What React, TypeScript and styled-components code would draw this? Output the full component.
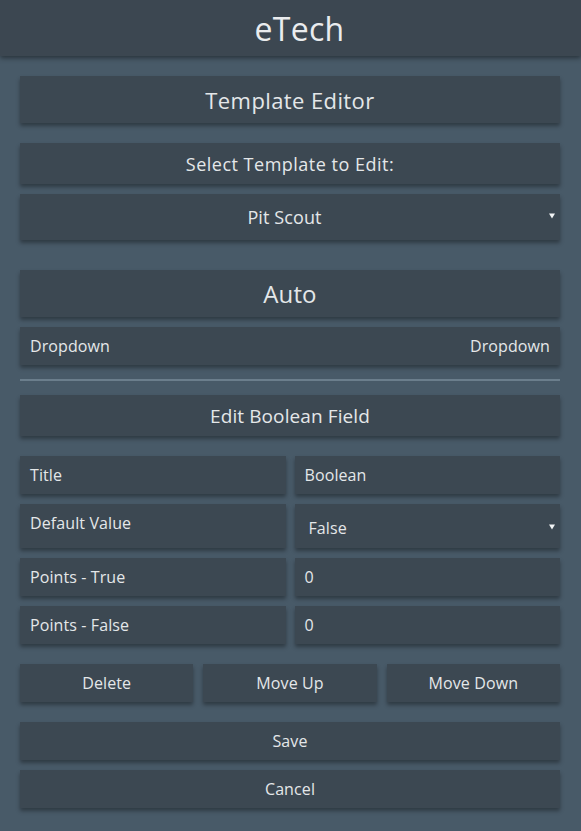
import React from "react";
import styled, { createGlobalStyle } from "styled-components";

const Global = createGlobalStyle`
  html, body {
    margin: 0;
    padding: 0;
    background: #485a68;
  }
  body {
    font-family: "Open Sans", "Noto Sans", sans-serif;
    font-weight: 400;
    color: #e4e7e9;
  }
  * { box-sizing: border-box; }
`;

const Page = styled.div`
  min-height: 831px;
  background: #485a68;
  display: flex;
  flex-direction: column;
`;

const Header = styled.header`
  height: 56px;
  background: #3c4751;
  box-shadow: 0 2px 5px rgba(0, 0, 0, 0.45);
  display: flex;
  align-items: center;
  justify-content: center;
  padding-left: 18px;
  font-size: 32px;
  letter-spacing: 0.3px;
  color: #eaecee;
  position: relative;
  z-index: 1;
`;

const Main = styled.main`
  padding: 20px 21px 23px 20px;
  display: flex;
  flex-direction: column;
`;

const Panel = styled.div<{ $mt?: number; $h: number; $fs: number; $ls?: number; $align?: "center" | "between" }>`
  margin-top: ${(p) => p.$mt ?? 0}px;
  height: ${(p) => p.$h}px;
  background: #3c4852;
  box-shadow: 0 3px 4px rgba(0, 0, 0, 0.35);
  display: flex;
  align-items: center;
  justify-content: ${(p) => (p.$align === "between" ? "space-between" : "center")};
  padding: 0 10px;
  font-size: ${(p) => p.$fs}px;
  letter-spacing: ${(p) => p.$ls ?? 0.1}px;
`;

const SelectBox = styled.div<{ $mt?: number; $h: number; $fs: number; $center?: boolean }>`
  margin-top: ${(p) => p.$mt ?? 0}px;
  height: ${(p) => p.$h}px;
  background: #3c4852;
  box-shadow: 0 3px 4px rgba(0, 0, 0, 0.35);
  display: grid;
  grid-template-columns: ${(p) => (p.$center ? "1fr auto 1fr" : "1fr auto")};
  align-items: center;
  padding: ${(p) => (p.$center ? "0 11px 0 0" : "3px 5px 0 14px")};
  font-size: ${(p) => p.$fs}px;
  letter-spacing: 0.1px;
`;

const SelectText = styled.span<{ $center?: boolean }>`
  grid-column: ${(p) => (p.$center ? 2 : 1)};
`;

const Arrow = styled.svg<{ $pull?: number }>`
  justify-self: end;
  width: 6px;
  height: 6px;
  margin-top: -2px;
  margin-right: ${(p) => -(p.$pull ?? 0)}px;
`;

const Divider = styled.hr`
  margin: 14px 0;
  border: none;
  height: 2px;
  background: #6b7e8c;
`;

const FieldGrid = styled.div`
  margin-top: 20px;
  display: grid;
  grid-template-columns: 1fr 1fr;
  column-gap: 9px;
  row-gap: 10px;
`;

const Cell = styled.div`
  min-height: 38px;
  background: #3c4852;
  box-shadow: 0 3px 4px rgba(0, 0, 0, 0.35);
  padding: 0 10px;
  line-height: 38px;
  font-size: 16px;
  letter-spacing: 0.1px;
`;

const ButtonRow = styled.div`
  margin-top: 20px;
  display: grid;
  grid-template-columns: 1fr 1fr 1fr;
  column-gap: 10px;
`;

const Button = styled.button<{ $mt?: number }>`
  margin-top: ${(p) => p.$mt ?? 0}px;
  height: 38px;
  border: none;
  background: #3c4852;
  box-shadow: 0 3px 4px rgba(0, 0, 0, 0.35);
  color: #e4e7e9;
  font-family: "Open Sans", "Noto Sans", sans-serif;
  font-weight: 400;
  font-size: 16px;
  letter-spacing: 0.1px;
  padding: 0;
  cursor: pointer;
`;

const DownArrow = ({ pull }: { pull?: number }) => (
  <Arrow viewBox="0 0 6 6" $pull={pull}>
    <polygon points="0,0.5 6,0.5 3,5.5" fill="#f2f4f5" />
  </Arrow>
);

export default function App() {
  return (
    <Page>
      <Global />
      <Header>eTech</Header>
      <Main>
        <Panel $h={47} $fs={22} $ls={0.4}>Template Editor</Panel>
        <Panel $mt={20} $h={41} $fs={18} $ls={0.5}>Select Template to Edit:</Panel>
        <SelectBox $mt={10} $h={46} $fs={18} $center>
          <SelectText $center>Pit Scout</SelectText>
          <DownArrow pull={6} />
        </SelectBox>
        <Panel $mt={30} $h={47} $fs={24}>Auto</Panel>
        <Panel $mt={10} $h={38} $fs={16} $align="between">
          <span>Dropdown</span>
          <span>Dropdown</span>
        </Panel>
        <Divider />
        <Panel $h={41} $fs={19}>Edit Boolean Field</Panel>
        <FieldGrid>
          <Cell>Title</Cell>
          <Cell>Boolean</Cell>
          <Cell>Default Value</Cell>
          <SelectBox $h={44} $fs={16}>
            <SelectText>False</SelectText>
            <DownArrow />
          </SelectBox>
          <Cell>Points - True</Cell>
          <Cell>0</Cell>
          <Cell>Points - False</Cell>
          <Cell>0</Cell>
        </FieldGrid>
        <ButtonRow>
          <Button>Delete</Button>
          <Button>Move Up</Button>
          <Button>Move Down</Button>
        </ButtonRow>
        <Button $mt={20}>Save</Button>
        <Button $mt={10}>Cancel</Button>
      </Main>
    </Page>
  );
}
